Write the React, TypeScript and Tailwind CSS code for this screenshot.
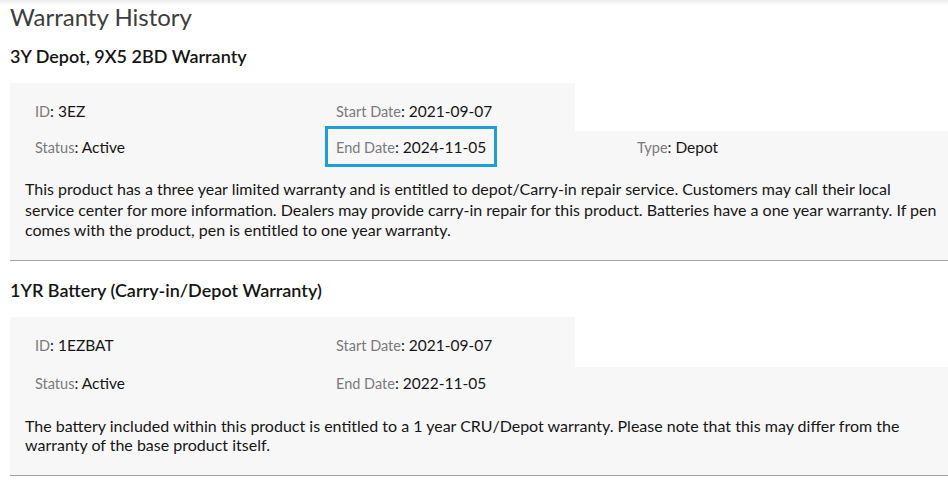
import React from "react";

type Field = { label: string; value: string; boxed?: boolean };

type Warranty = {
  title: string;
  top: Field[];
  bottom: Field[];
  text: string;
  textClass: string;
  topPad: string;
  gap: string;
  bottomPad: string;
};

const WARRANTIES: Warranty[] = [
  {
    title: "3Y Depot, 9X5 2BD Warranty",
    top: [
      { label: "ID", value: "3EZ" },
      { label: "Start Date", value: "2021-09-07" },
    ],
    bottom: [
      { label: "Status", value: "Active" },
      { label: "End Date", value: "2024-11-05", boxed: true },
      { label: "Type", value: "Depot" },
    ],
    text: "This product has a three year limited warranty and is entitled to depot/Carry-in repair service. Customers may call their local service center for more information. Dealers may provide carry-in repair for this product. Batteries have a one year warranty. If pen comes with the product, pen is entitled to one year warranty.",
    textClass: "text-[16px] leading-[20.5px]",
    topPad: "pt-[18px] pb-[10px]",
    gap: "mt-[22px]",
    bottomPad: "pb-[19px]",
  },
  {
    title: "1YR Battery (Carry-in/Depot Warranty)",
    top: [
      { label: "ID", value: "1EZBAT" },
      { label: "Start Date", value: "2021-09-07" },
    ],
    bottom: [
      { label: "Status", value: "Active" },
      { label: "End Date", value: "2022-11-05" },
    ],
    text: "The battery included within this product is entitled to a 1 year CRU/Depot warranty. Please note that this may differ from the warranty of the base product itself.",
    textClass: "text-[16px] leading-[19px]",
    topPad: "pt-[18px] pb-[12px]",
    gap: "mt-[23px]",
    bottomPad: "pb-[21px]",
  },
];

function FieldCell({ f }: { f: Field }) {
  return (
    <div className="h-[20px] w-[301px] shrink-0 pl-[25px] leading-[20px]">
      <span className="relative inline-block h-[20px] align-top leading-[20px]">
        <span className="text-[14.5px] leading-[20px] text-[#7a7a7a]">{f.label}</span>
        <span className="text-[15.5px] leading-[20px] text-[#161616]">: {f.value}</span>
        {f.boxed && (
          <span className="absolute -top-[11px] -bottom-[10px] -left-[11px] -right-[11px] border-[3px] border-[#1a9fd9]" />
        )}
      </span>
    </div>
  );
}

function WarrantyBlock({ w }: { w: Warranty }) {
  return (
    <section>
      <h2 className="mb-[15px] mt-[3px] text-[18px] font-semibold leading-[24px] text-[#151515]">{w.title}</h2>
      <div className={`w-[565px] bg-[#f7f7f7] ${w.topPad}`}>
        <div className="flex">
          {w.top.map((f) => (
            <FieldCell key={f.label} f={f} />
          ))}
        </div>
      </div>
      <div className={`bg-[#f7f7f7] pt-[6px] ${w.bottomPad}`}>
        <div className="flex">
          {w.bottom.map((f) => (
            <FieldCell key={f.label} f={f} />
          ))}
        </div>
        <p className={`${w.gap} pl-[15px] pr-[10px] text-[#161616] ${w.textClass}`}>{w.text}</p>
      </div>
      <div className="h-px bg-[#a3a3a3]" />
    </section>
  );
}

export default function App() {
  return (
    <div className="min-h-[493px] w-[948px] overflow-hidden bg-white font-['Lato',sans-serif]">
      <div className="h-[5px] bg-gradient-to-b from-[#ececec] to-white" />
      <div className="pl-[10px]">
        <h1 className="text-[24px] leading-[24px] text-[#3d3d3d]">Warranty History</h1>
        <div className="mt-[12px] flex flex-col gap-[14px]">
          {WARRANTIES.map((w) => (
            <WarrantyBlock key={w.title} w={w} />
          ))}
        </div>
      </div>
    </div>
  );
}
